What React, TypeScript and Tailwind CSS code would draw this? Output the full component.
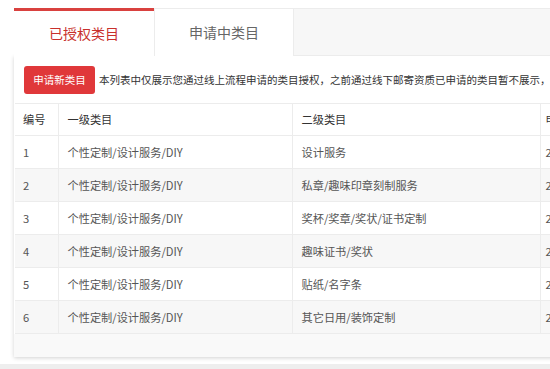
const rows = [
  { id: 1, first: '个性定制/设计服务/DIY', second: '设计服务' },
  { id: 2, first: '个性定制/设计服务/DIY', second: '私章/趣味印章刻制服务' },
  { id: 3, first: '个性定制/设计服务/DIY', second: '奖杯/奖章/奖状/证书定制' },
  { id: 4, first: '个性定制/设计服务/DIY', second: '趣味证书/奖状' },
  { id: 5, first: '个性定制/设计服务/DIY', second: '贴纸/名字条' },
  { id: 6, first: '个性定制/设计服务/DIY', second: '其它日用/装饰定制' },
];

const App = () => {
  return (
    <div
      className="w-[550px] h-[369px] bg-white overflow-hidden flex flex-col"
      style={{ fontFamily: '"Microsoft YaHei", "Noto Sans CJK SC", "Liberation Sans", sans-serif' }}
    >
      <div className="pt-2 pl-[14px] flex-1">
        {/* Tabs */}
        <div className="flex h-[48px] w-[600px]">
          <div className="w-[140px] border-t-[3px] border-[#d9413f] bg-white flex items-center justify-center text-[14px] text-[#c8302c]">
            已授权类目
          </div>
          <div className="w-[139px] border-t border-l border-[#ececec] bg-white flex items-center justify-center text-[14px] text-[#666]">
            申请中类目
          </div>
          <div className="flex-1 bg-[#f7f7f7] border-t border-l border-b border-[#ececec]"></div>
        </div>

        {/* Card */}
        <div className="w-[600px] bg-white shadow-[0_1px_4px_rgba(0,0,0,0.18)]">
          <div className="flex items-center gap-[4px] pt-[10px] pl-[10px] pb-[9px]">
            <button className="shrink-0 whitespace-nowrap h-[28px] w-[71px] rounded-[3px] bg-[#e0383a] text-white text-[10.5px]">
              申请新类目
            </button>
            <span className="text-[10.5px] text-[#333] whitespace-nowrap">
              本列表中仅展示您通过线上流程申请的类目授权，之前通过线下邮寄资质已申请的类目暂不展示，但不影响您的正常经营。
            </span>
          </div>

          <table className="ml-[1px] border-collapse text-[11.2px] text-[#555] table-fixed w-[599px]">
            <colgroup>
              <col className="w-[43px]" />
              <col className="w-[234px]" />
              <col className="w-[248px]" />
              <col />
            </colgroup>
            <thead>
              <tr className="h-[32px] border-t border-b border-[#ececec] text-[#333]">
                <th className="text-left font-normal pl-[8px] whitespace-nowrap">编号</th>
                <th className="text-left font-normal pl-[9px] border-l border-[#ececec]">一级类目</th>
                <th className="text-left font-normal pl-[9px] border-l border-[#ececec]">二级类目</th>
                <th className="text-left font-normal pl-[5px] border-l border-[#ececec] whitespace-nowrap">申请时间</th>
              </tr>
            </thead>
            <tbody>
              {rows.map((r) => (
                <tr
                  key={r.id}
                  className={`h-[33px] border-b border-[#ececec] ${r.id % 2 === 0 ? 'bg-[#f7f7f7]' : 'bg-white'}`}
                >
                  <td className="pl-[8px]">{r.id}</td>
                  <td className="pl-[9px] border-l border-[#ececec]">{r.first}</td>
                  <td className="pl-[9px] border-l border-[#ececec]">{r.second}</td>
                  <td className="pl-[5px] border-l border-[#ececec] whitespace-nowrap">2019-03-12</td>
                </tr>
              ))}
            </tbody>
          </table>
          <div className="h-[23px] bg-[#f9f9f9]"></div>
        </div>
      </div>
      <div className="h-[5px] bg-[#eeeeee]"></div>
    </div>
  );
};

export default App;
